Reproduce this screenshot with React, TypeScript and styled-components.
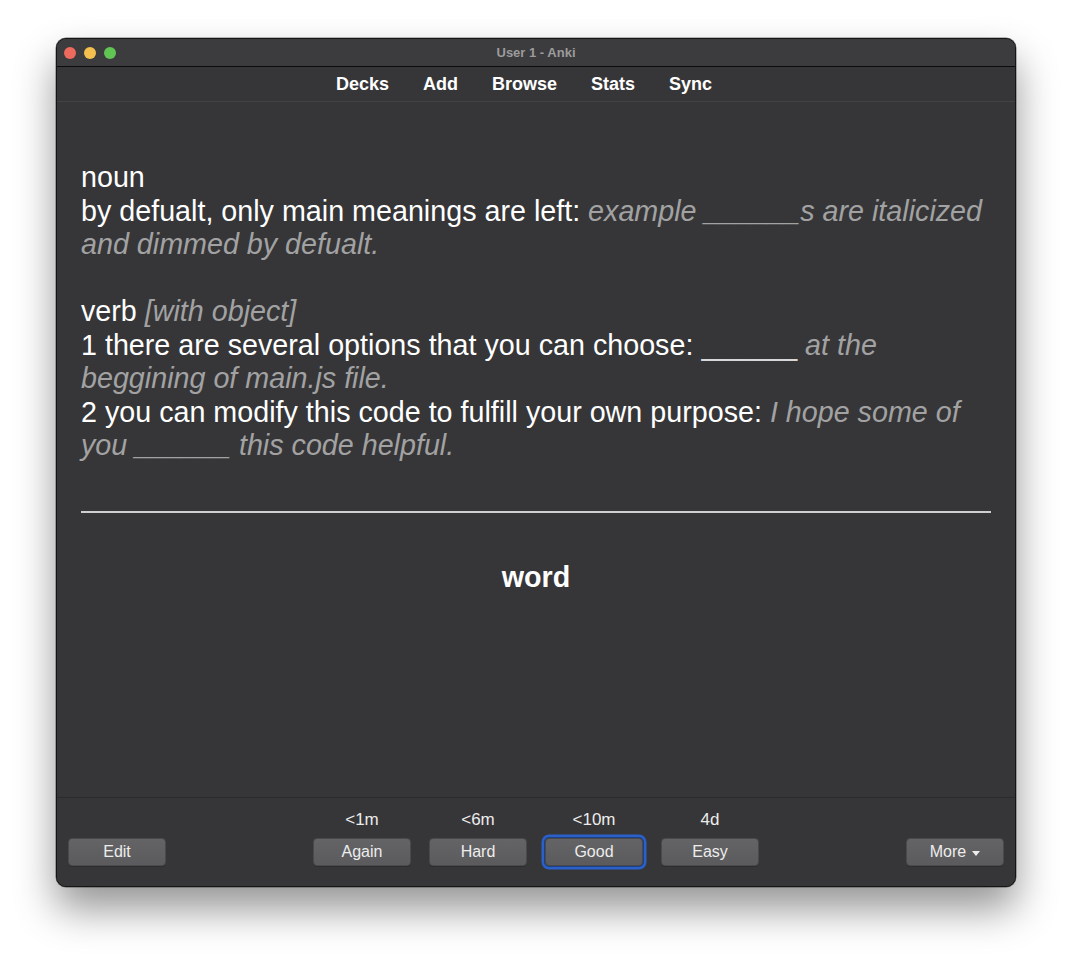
import React from "react";
import styled, { createGlobalStyle } from "styled-components";

const Global = createGlobalStyle`
  html, body { margin: 0; padding: 0; background: #ffffff; }
  body { font-family: "Liberation Sans", Arial, Helvetica, sans-serif; }
  * { box-sizing: border-box; }
`;

const Page = styled.div`
  width: 1072px;
  height: 961px;
  padding: 38px 56px 0 56px;
  background: #ffffff;
`;

const Window = styled.div`
  width: 960px;
  height: 849px;
  border-radius: 10px;
  border: 1px solid #151515;
  overflow: hidden;
  display: flex;
  flex-direction: column;
  background: #363638;
  box-shadow: 0 22px 40px rgba(0, 0, 0, 0.42), 0 0 0 0.5px rgba(0, 0, 0, 0.5);
`;

const TitleBar = styled.div`
  height: 28px;
  flex: none;
  display: grid;
  grid-template-columns: 1fr auto 1fr;
  align-items: center;
  background: #3c3c3e;
  border-bottom: 1px solid #0c0c0c;
  padding: 0 7px;
`;

const Lights = styled.div`
  display: flex;
  gap: 8px;
`;

const Light = styled.span<{ $c: string }>`
  width: 12px;
  height: 12px;
  border-radius: 50%;
  background: ${(p) => p.$c};
  display: block;
`;

const Title = styled.div`
  font-size: 13px;
  font-weight: bold;
  color: #9b9b9c;
`;

const Toolbar = styled.nav`
  height: 35px;
  flex: none;
  display: flex;
  justify-content: center;
  align-items: center;
  padding-right: 24px;
  background: #363638;
  border-bottom: 1px solid #424244;
`;

const NavLink = styled.span`
  font-size: 18px;
  font-weight: bold;
  color: #ffffff;
  padding: 0 17px;
`;

const Card = styled.main`
  flex: 1;
  padding: 59px 24px 0 24px;
  color: #ffffff;
  font-size: 28.7px;
  line-height: 33.5px;
`;

const Dim = styled.i`
  color: #a2a2a3;
`;

const Blank = styled.span`
  color: #d8d8d8;
`;

const Rule = styled.hr`
  margin: 48px 0 0 0;
  border: none;
  height: 2px;
  background: #cfcfcf;
`;

const Answer = styled.div`
  margin-top: 48px;
  text-align: center;
  font-weight: bold;
`;

const BottomBar = styled.footer`
  height: 89px;
  flex: none;
  border-top: 1px solid #2b2b2d;
  background: #363638;
  display: grid;
  grid-template-columns: 1fr auto 1fr;
  align-items: end;
  padding: 11px 11px 20px 11px;
`;

const Side = styled.div<{ $right?: boolean }>`
  display: flex;
  justify-content: ${(p) => (p.$right ? "flex-end" : "flex-start")};
`;

const Answers = styled.div`
  display: flex;
  gap: 18px;
`;

const AnswerCol = styled.div`
  display: flex;
  flex-direction: column;
  align-items: center;
  gap: 8px;
`;

const Due = styled.div`
  font-size: 17px;
  line-height: 21px;
  color: #ececec;
`;

const Button = styled.button<{ $focus?: boolean }>`
  width: 98px;
  height: 28px;
  border-radius: 4px;
  border: 1px solid #4a4a4c;
  background: linear-gradient(#646466, #5b5b5d);
  color: #ededed;
  font-family: "Liberation Sans", Arial, sans-serif;
  font-size: 16px;
  padding: 0;
  display: flex;
  align-items: center;
  justify-content: center;
  gap: 6px;
  box-shadow: ${(p) =>
    p.$focus
      ? "0 0 0 1px #1d3f86, 0 0 0 3.5px #2b60c8"
      : "0 1px 0 rgba(0,0,0,0.15)"};
`;

const Caret = styled.span`
  width: 0;
  height: 0;
  border-left: 4px solid transparent;
  border-right: 4px solid transparent;
  border-top: 5px solid #ededed;
  margin-top: 2px;
`;

const answers = [
  { due: "<1m", label: "Again" },
  { due: "<6m", label: "Hard" },
  { due: "<10m", label: "Good", focus: true },
  { due: "4d", label: "Easy" },
];

export default function App() {
  return (
    <Page>
      <Global />
      <Window>
        <TitleBar>
          <Lights>
            <Light $c="#ed6a5e" />
            <Light $c="#f4bf4f" />
            <Light $c="#61c554" />
          </Lights>
          <Title>User 1 - Anki</Title>
          <div />
        </TitleBar>
        <Toolbar>
          <NavLink>Decks</NavLink>
          <NavLink>Add</NavLink>
          <NavLink>Browse</NavLink>
          <NavLink>Stats</NavLink>
          <NavLink>Sync</NavLink>
        </Toolbar>
        <Card>
          <div>
            noun
            <br />
            by defualt, only main meanings are left:{" "}
            <Dim>example ______s are italicized and dimmed by defualt.</Dim>
            <br />
            <br />
            verb <Dim>[with object]</Dim>
            <br />
            1 there are several options that you can choose:{" "}
            <Blank>______</Blank> <Dim>at the beggining of main.js file.</Dim>
            <br />
            2 you can modify this code to fulfill your own purpose:{" "}
            <Dim>I hope some of you ______ this code helpful.</Dim>
          </div>
          <Rule />
          <Answer>word</Answer>
        </Card>
        <BottomBar>
          <Side>
            <Button>Edit</Button>
          </Side>
          <Answers>
            {answers.map((a) => (
              <AnswerCol key={a.label}>
                <Due>{a.due}</Due>
                <Button $focus={a.focus}>{a.label}</Button>
              </AnswerCol>
            ))}
          </Answers>
          <Side $right>
            <Button>
              More <Caret />
            </Button>
          </Side>
        </BottomBar>
      </Window>
    </Page>
  );
}
